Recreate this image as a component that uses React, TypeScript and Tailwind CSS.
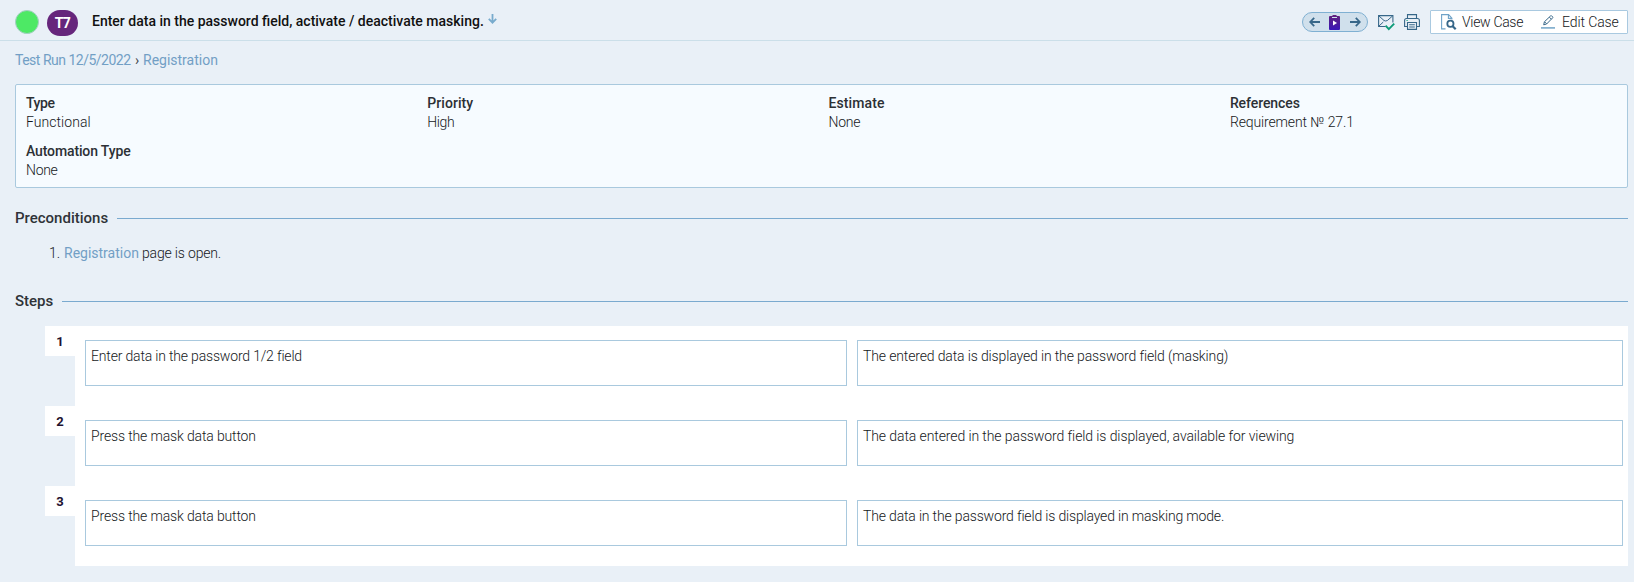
import type { ReactNode } from "react";

const fields = [
  { label: "Type", value: "Functional", labelClass: "tracking-[-0.41px]", valueClass: "tracking-[0.05px]" },
  { label: "Priority", value: "High", labelClass: "tracking-[0.05px]", valueClass: "tracking-[-0.4px]" },
  { label: "Estimate", value: "None", labelClass: "tracking-[0.08px]", valueClass: "tracking-[-0.3px]" },
  { label: "References", value: "Requirement № 27.1", labelClass: "tracking-[-0.08px]", valueClass: "tracking-[-0.13px]" },
  { label: "Automation Type", value: "None", labelClass: "tracking-[-0.13px]", valueClass: "tracking-[-0.3px]" },
];

const steps = [
  {
    action: "Enter data in the password 1/2 field",
    actionClass: "tracking-[-0.18px]",
    expected: "The entered data is displayed in the password field (masking)",
    expectedClass: "tracking-[-0.14px]",
  },
  {
    action: "Press the mask data button",
    actionClass: "tracking-[-0.15px]",
    expected: "The data entered in the password field is displayed, available for viewing",
    expectedClass: "tracking-[-0.1px]",
  },
  {
    action: "Press the mask data button",
    actionClass: "tracking-[-0.15px]",
    expected: "The data in the password field is displayed in masking mode.",
    expectedClass: "tracking-[-0.17px]",
  },
];

function ArrowIcon({ flip = false }: { flip?: boolean }) {
  return (
    <svg width="11" height="10" viewBox="0 0 11 10" fill="none" stroke="#376789" strokeWidth="1.8" className={flip ? "-scale-x-100" : ""}>
      <path d="M11 5H1.4M5.2 .8L1.2 5l4 4.2" />
    </svg>
  );
}

function ClipboardPlayIcon() {
  return (
    <svg className="-ml-0.5" width="11" height="15" viewBox="0 0 11 15">
      <defs>
        <linearGradient id="clip" x1="0" y1="0" x2="0" y2="1">
          <stop offset="0" stopColor="#61227b" />
          <stop offset="1" stopColor="#3a17b8" />
        </linearGradient>
      </defs>
      <path d="M1 1h2.5V0h4v1H10a1 1 0 0 1 1 1v12a1 1 0 0 1-1 1H1a1 1 0 0 1-1-1V2a1 1 0 0 1 1-1z" fill="url(#clip)" />
      <path d="M3 2.5h5" stroke="#d0e0ec" />
      <path d="M4 5.5v5L8 8z" fill="#fff" />
    </svg>
  );
}

function MailCheckIcon() {
  return (
    <svg width="17" height="16" viewBox="0 0 17 16" fill="none">
      <path d="M7.5 11.5H.6V.6h14.3v7" stroke="#376789" strokeWidth="1.1" />
      <path d="M1 1l5 4.5q1.7 1 3.4 0L14.5 1M1 11l4.3-4" stroke="#376789" />
      <path d="M7.6 10.6l3.2 3.6 5.4-5.6" stroke="#0e9c79" strokeWidth="1.9" />
    </svg>
  );
}

function PrinterIcon() {
  return (
    <svg width="16" height="16" viewBox="0 0 16 16" fill="none" stroke="#376789" strokeWidth="1.1">
      <path d="M3.5 4.5V.6h9v3.9M3.5 12.5H.6v-6q0-2 2-2h10.8q2 0 2 2v6h-2.9" />
      <path d="M3.5 8.5h9v6.9h-9zM5.2 10.8h5.6M5.2 13h5.6" />
      <path d="M2.5 6.5h1.2" stroke="#0e9c79" />
    </svg>
  );
}

function ViewIcon() {
  return (
    <svg width="16" height="16" viewBox="0 0 16 16" fill="none">
      <path d="M4.5 14.9H.6V.6h7l3.3 3.6v1.3M7.4 .8v3.6h3.4" stroke="#6fa3c8" strokeWidth="1.1" />
      <circle cx="9.4" cy="9.8" r="3.1" stroke="#376789" strokeWidth="1.8" />
      <path d="M11.5 12l3.2 3.2" stroke="#376789" strokeWidth="2.2" />
    </svg>
  );
}

function EditIcon() {
  return (
    <svg width="14" height="14" viewBox="0 0 14 14" fill="none">
      <path d="M2.7 9.8l.7-3L9.6 .9q.6-.4 1.1 0l.9.9q.5.6 0 1.1L5.6 9zM8.4 2.2l2 2M3.6 6.8l2 2" stroke="#376789" />
      <path d="M0 12.9h14" stroke="#7aaacb" strokeWidth="1.6" />
    </svg>
  );
}

function SectionTitle({ children }: { children: ReactNode }) {
  return (
    <div className="flex h-5 items-center gap-[9px] text-[15px] font-medium leading-5 text-[#2f3338]">
      <h2>{children}</h2>
      <div className="h-px flex-1 bg-[#7aaacf]" />
    </div>
  );
}

export default function App() {
  return (
    <div className="h-[582px] w-[1634px] overflow-hidden bg-[#e9f0f7] font-['Roboto',sans-serif] text-sm font-light leading-[19px] text-[#15181b]">
      <header className="flex h-[41px] items-start border-b border-[#cbdfe9] pl-[15px] pr-1.5">
        <div className="mt-2.5 size-6 rounded-full border border-[#a5cfc4] bg-[#4de965]" />
        <div className="ml-2 mt-2.5 flex h-[26px] w-[31px] items-center justify-center rounded-[13px] bg-[#66267c] text-sm font-bold tracking-[-0.5px] text-white">
          T7
        </div>
        <div className="ml-3.5 mt-3 flex h-[19px] items-start">
          <h1 className="font-medium text-[#111]">Enter data in the password field, activate / deactivate masking.</h1>
          <svg className="ml-1 mt-0.5" width="9" height="10" viewBox="0 0 9 10" fill="none" stroke="#78abcd" strokeWidth="1.8">
            <path d="M4.5 0v8.6M.8 4.8l3.7 3.8 3.7-3.8" />
          </svg>
        </div>
        <div className="ml-auto flex items-start">
          <div className="mt-3 flex h-5 w-[66px] items-center justify-between rounded-full border border-[#7fb0d2] bg-[#d0e0ec] px-1.5">
            <ArrowIcon />
            <ClipboardPlayIcon />
            <ArrowIcon flip />
          </div>
          <div className="ml-2.5 mt-[15px]">
            <MailCheckIcon />
          </div>
          <div className="ml-[9px] mt-3.5">
            <PrinterIcon />
          </div>
          <div className="ml-2.5 mt-2.5 flex h-6 w-[198px] items-center rounded-[1px] border border-[#a9c9e0] bg-white">
            <span className="ml-2.5 mr-[5px]">
              <ViewIcon />
            </span>
            <span className="w-[62px] whitespace-nowrap tracking-[-0.32px]">View Case</span>
            <span className="ml-[17px] mr-[7px]">
              <EditIcon />
            </span>
            <span className="whitespace-nowrap tracking-[-0.1px]">Edit Case</span>
          </div>
        </div>
      </header>

      <nav className="flex h-[43px] pl-[15px] pt-2.5 font-normal text-[#729fc5]">
        <a className="w-[120px] whitespace-nowrap tracking-[-0.5px]">Test Run 12/5/2022</a>
        <span className="w-2 text-[#43474b]">›</span>
        <a>Registration</a>
      </nav>

      <main className="pl-[15px] pr-1.5">
        <dl className="grid h-[104px] grid-cols-[repeat(4,401.3px)] grid-rows-[48px_38px] rounded-[2px] border border-[#a9c9de] bg-[#f6fbff] pl-2.5 pt-[9px]">
          {fields.map((f) => (
            <div key={f.label}>
              <dt className={`font-medium text-[#2c3035] ${f.labelClass}`}>{f.label}</dt>
              <dd className={f.valueClass}>{f.value}</dd>
            </div>
          ))}
        </dl>

        <section className="pt-5">
          <SectionTitle>Preconditions</SectionTitle>
          <ol className="mt-4 h-[47px]">
            <li className="flex pl-[34px]">
              <span className="w-[15px]">1.</span>
              <span className="w-[78px] font-normal text-[#729fc5]">Registration</span>
              <span className="tracking-[-0.17px]">page is open.</span>
            </li>
          </ol>
        </section>

        <section>
          <SectionTitle>Steps</SectionTitle>
          <div className="mt-[15px] pl-[30px]">
            {steps.map((s, i) => (
              <div key={i} className="flex h-20">
                <div className="h-[30px] w-[30px] bg-white text-center text-[13px] font-bold leading-[31px] text-[#22122f]">{i + 1}</div>
                <div className="grid flex-1 grid-cols-[762px_766px] gap-2.5 bg-white pl-2.5 pt-3.5">
                  <div className={`h-[46px] border border-[#a9c9de] pl-[5px] pt-1.5 ${s.actionClass}`}>{s.action}</div>
                  <div className={`h-[46px] border border-[#a9c9de] pl-[5px] pt-1.5 ${s.expectedClass}`}>{s.expected}</div>
                </div>
              </div>
            ))}
          </div>
        </section>
      </main>
    </div>
  );
}
